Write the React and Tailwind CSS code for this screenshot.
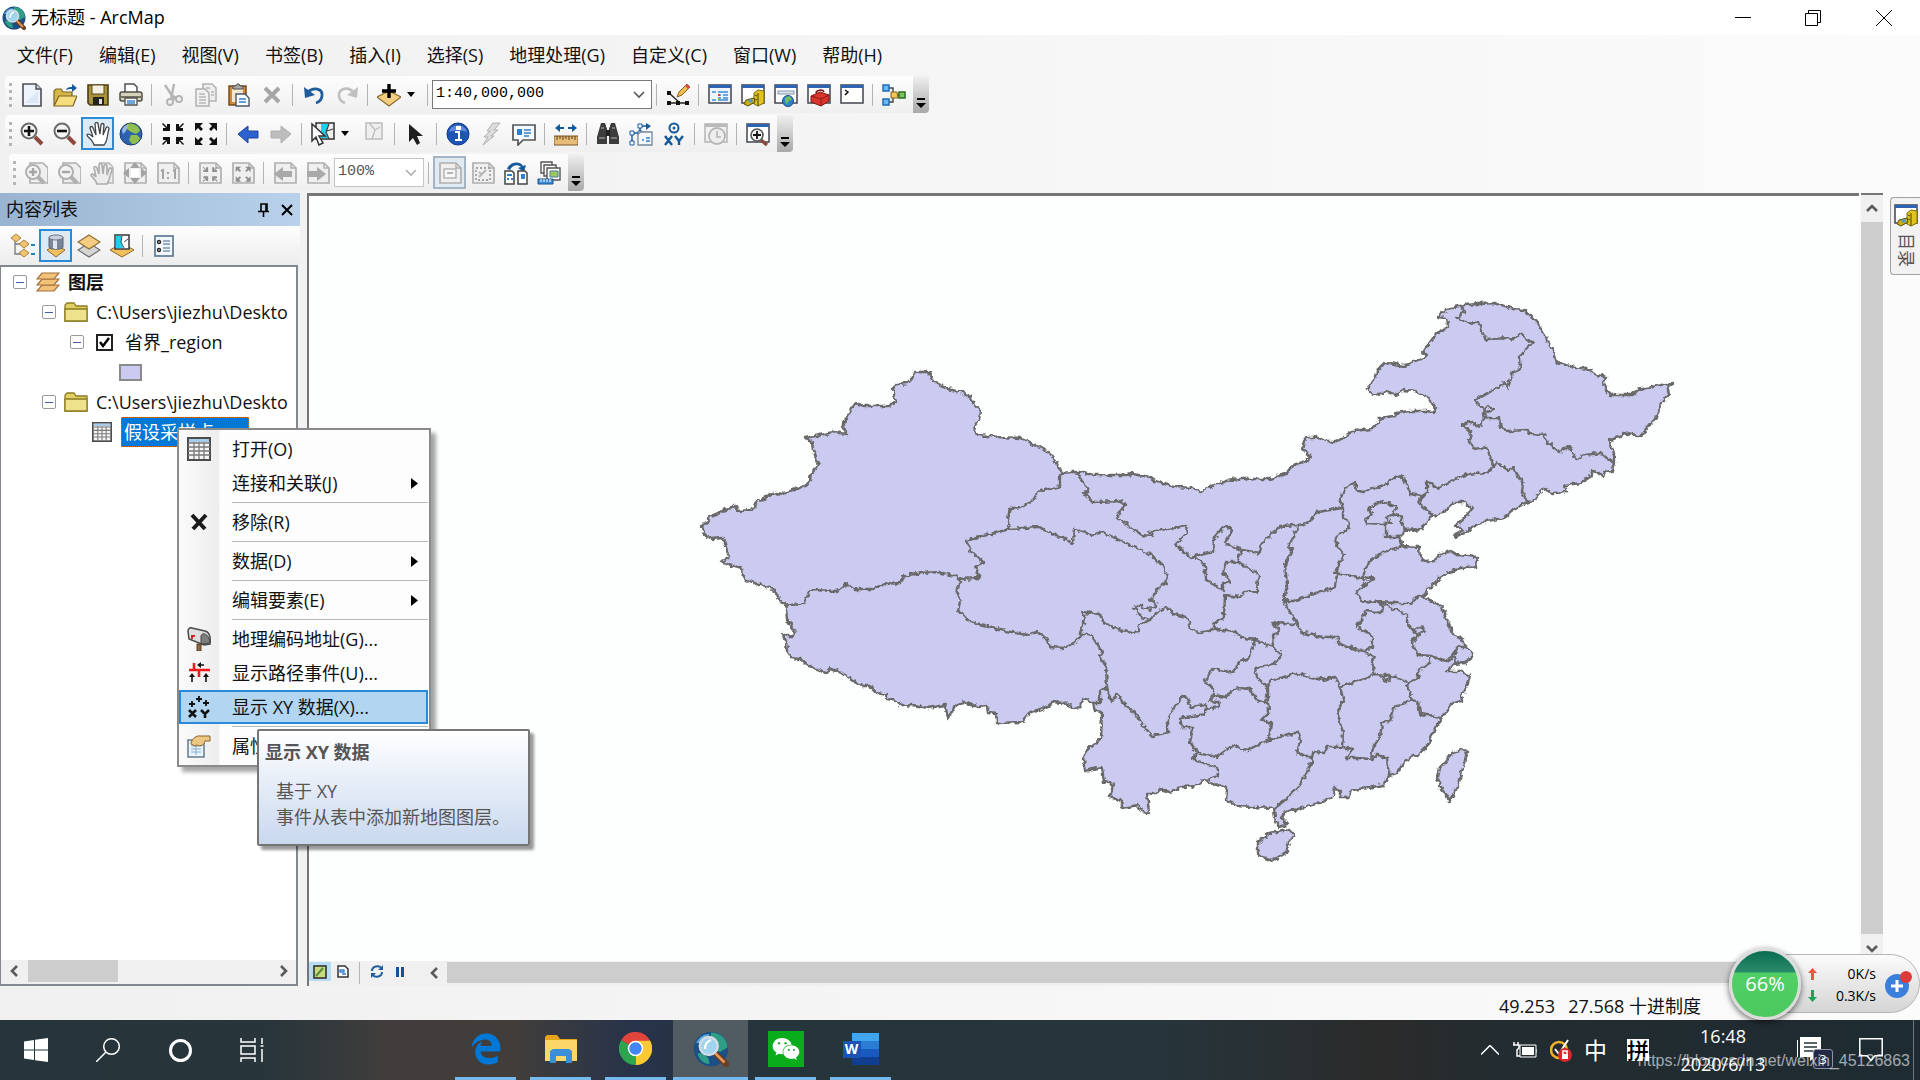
import React from "react";
import { FaEdgeLegacy, FaWeixin } from "react-icons/fa6";

const Svg = ({ children, className = "w-6 h-6" }) => (
  <svg className={className} viewBox="0 0 24 24" fill="none" aria-hidden="true">
    {children}
  </svg>
);

/* ---------- Standard toolbar icons ---------- */

const NewIcon = () => (
  <Svg>
    <path d="M3 1h13l5 5v17H3z" fill="#eef4fb" stroke="#4d4d55" strokeWidth="1.6" />
    <path d="M16 1v5h5" fill="#c9d3e0" stroke="#4d4d55" strokeWidth="1.4" />
    <path d="M6 19L18 8v12H6z" fill="#dbe8f6" />
  </Svg>
);

const OpenIcon = () => (
  <Svg>
    <path d="M1 22V8l2-2h5l2 3h9v4" fill="#d8b64a" stroke="#7a6420" strokeWidth="1.2" />
    <path d="M1 23l5-10h18l-4 10z" fill="#f6dd7d" stroke="#7a6420" strokeWidth="1.2" />
    <path d="M13 7c1-3 4-3 6-3V1l5 4-5 4V6c-3 0-4 0-6 1z" fill="#14599c" />
  </Svg>
);

const SaveIcon = () => (
  <Svg>
    <path d="M2 2h20v20H4l-2-2z" fill="#a8923c" stroke="#4a3d14" strokeWidth="1.6" />
    <rect x="6" y="2" width="12" height="9" fill="#f4f1e4" stroke="#5b4d1d" />
    <rect x="7" y="14" width="11" height="8" fill="#222" />
    <rect x="13" y="16" width="3" height="5" fill="#ddd" />
  </Svg>
);

const PrintIcon = () => (
  <Svg>
    <path d="M6 9V1h9l3 3v5" fill="#fff" stroke="#505050" strokeWidth="1.5" />
    <rect x="1" y="9" width="22" height="9" rx="2" fill="#d6d3bb" stroke="#4d4d45" strokeWidth="1.5" />
    <path d="M2 14h20" stroke="#77725c" strokeWidth="2" />
    <path d="M6 15h12v7H6z" fill="#fff" stroke="#505050" strokeWidth="1.3" />
    <path d="M8 18h8M8 20h8" stroke="#3d8bd0" strokeWidth="1.3" />
  </Svg>
);

const CutIcon = () => (
  <Svg>
    <path d="M4 2l10 15M13 1l-3 15" stroke="#b5b5b5" strokeWidth="2.4" />
    <circle cx="9" cy="19" r="3" stroke="#b5b5b5" strokeWidth="2" />
    <circle cx="18" cy="16" r="3" stroke="#b5b5b5" strokeWidth="2" />
    <path d="M10 12l6 3" stroke="#b5b5b5" strokeWidth="2" />
  </Svg>
);

const CopyIcon = () => (
  <Svg>
    <path d="M9 1h9l4 4v13H9z" fill="#eee" stroke="#b0b0b0" strokeWidth="1.5" />
    <path d="M2 6h9l4 4v13H2z" fill="#f1f1f1" stroke="#b0b0b0" strokeWidth="1.5" />
    <path d="M5 11h6M5 14h7M5 17h7M5 20h7M12 5h4M17 9h3M17 12h3" stroke="#b8b8b8" strokeWidth="1.3" />
  </Svg>
);

const PasteIcon = () => (
  <Svg>
    <rect x="2" y="3" width="17" height="19" fill="#d48a35" stroke="#6d431a" strokeWidth="1.4" />
    <rect x="5" y="6" width="11" height="13" fill="#f3e7d2" />
    <path d="M6 6V3h3l1-2h2l1 2h3v3z" fill="#aaa" stroke="#505050" />
    <path d="M9 11h9l4 4v8H9z" fill="#fff" stroke="#4b5766" strokeWidth="1.4" />
    <path d="M12 16h7M12 19h7" stroke="#2f7fd0" strokeWidth="1.6" />
  </Svg>
);

const DeleteIcon = () => (
  <Svg>
    <path d="M5 5l14 14M19 5L5 19" stroke="#a6a6a6" strokeWidth="4" />
  </Svg>
);

const UndoIcon = () => (
  <Svg>
    <path d="M6 9c5-5 15-4 14 4-.5 4-3 6-6 7" stroke="#1f5c9c" strokeWidth="2.8" />
    <path d="M2 4l1 11 10-3z" fill="#1f5c9c" />
  </Svg>
);

const RedoIcon = () => (
  <Svg>
    <path d="M19 10C14 3 3 5 4 13c.5 4 3 6 6 7" stroke="#c0c0c0" strokeWidth="2.6" />
    <path d="M23 4l-1 11-10-3z" fill="#c0c0c0" />
  </Svg>
);

const AddDataIcon = () => (
  <Svg>
    <path d="M12 8l12 6-12 9L0 14z" fill="#f5cd82" stroke="#8e6c2e" strokeWidth="1.2" />
    <path d="M12 1v14M5 8h14" stroke="#000" strokeWidth="3.4" />
  </Svg>
);

const EditorIcon = () => (
  <Svg>
    <path d="M3 10l10 9M3 20h18" stroke="#222" strokeWidth="1.3" />
    <path d="M1 8h4v4H1zM1 18h4v4H1zM10 18h4v4h-4zM19 18h4v4h-4z" fill="#111" />
    <path d="M11 14l2-5 8-8 3 3-8 8z" fill="#f1bd4c" stroke="#875e1e" />
    <path d="M19 3l2-2 3 3-2 2z" fill="#d65252" />
  </Svg>
);

const WindowFrame = ({ children, fill = "#fff", bar = "#2e62b3", edge = "#4c4f57" }) => (
  <Svg>
    <rect x="1" y="2" width="22" height="18" fill={fill} stroke={edge} strokeWidth="1.6" />
    <rect x="1" y="2" width="22" height="3" fill={bar} />
    {children}
  </Svg>
);

const TocWindowIcon = () => (
  <WindowFrame fill="#eef5fd">
    <path d="M4 9h4M10 12h3M10 15h3M4 17h4" stroke="#3b8ed8" strokeWidth="1.6" />
    <path d="M10 9h10M15 12h5M15 15h5M10 17h10" stroke="#3b8ed8" strokeWidth="1.5" />
    <path d="M10 12h2" stroke="#e33" strokeWidth="2" />
    <path d="M10 16h2" stroke="#7fc21b" strokeWidth="2" />
  </WindowFrame>
);

const CatalogIcon = () => (
  <WindowFrame>
    <path d="M13 10l4-3 6 1v12l-6 3-4-2z" fill="#e1c51e" stroke="#7d6b0a" />
    <path d="M17 10v13M14 12l2 1M14 16l2 1" stroke="#6e5e05" strokeWidth="1.3" />
    <path d="M5 17l8-2 1 4-7 4-4-2z" fill="#c9ae14" stroke="#5b4e05" />
    <path d="M7 17l4-1 1 3-3 1z" fill="#4f9bd0" />
  </WindowFrame>
);

const SearchWindowIcon = () => (
  <WindowFrame>
    <rect x="4" y="8" width="16" height="3" fill="#dbe6f2" stroke="#8595a8" />
    <circle cx="14" cy="18" r="5.5" fill="#2f7fcf" stroke="#1e4f8a" />
    <path d="M11 15l4-2 3 3-4 3-1 3-2-4z" fill="#6fc05a" />
  </WindowFrame>
);

const ToolboxIcon = () => (
  <WindowFrame>
    <path d="M4 13l9-4 9 3v6l-8 5-10-4z" fill="#d9352c" stroke="#7d1610" />
    <path d="M4 13l10 3 8-4M14 16v7" stroke="#8e1b14" />
    <path d="M9 10c0-3 7-4 8-1" stroke="#7d1610" strokeWidth="1.6" />
  </WindowFrame>
);

const PythonIcon = () => (
  <WindowFrame>
    <path d="M5 7l3 2-3 3" stroke="#111" strokeWidth="1.5" />
  </WindowFrame>
);

const ModelIcon = () => (
  <Svg>
    <path d="M7 5h4v14H7M11 12h12" stroke="#444" strokeWidth="1.4" />
    <rect x="1" y="2" width="6" height="6" fill="#6cb8f2" stroke="#1c6cb5" strokeWidth="1.5" />
    <rect x="1" y="16" width="6" height="6" fill="#6cb8f2" stroke="#1c6cb5" strokeWidth="1.5" />
    <path d="M9 9l6 0 1 6H9z" fill="#f3c557" stroke="#83601a" />
    <rect x="17" y="9" width="6" height="6" fill="#7cc463" stroke="#2c6e1d" strokeWidth="1.5" />
  </Svg>
);

/* ---------- Tools toolbar icons ---------- */

const Magnifier = ({ plus, dim }) => (
  <Svg>
    <path d="M15 15l7 7" stroke={dim ? "#b5b5b5" : "#8c4a3c"} strokeWidth="4" />
    <circle cx="9" cy="9" r="7.5" fill="#f5f5f5" stroke={dim ? "#b5b5b5" : "#6a6a6a"} strokeWidth="2" />
    <path d={plus ? "M4 9h10M9 4v10" : "M4 9h10"} stroke={dim ? "#b5b5b5" : "#111"} strokeWidth="2.6" />
  </Svg>
);

const HandIcon = ({ dim }) => (
  <Svg>
    <path
      d="M8 23C7 18 1 15 1 13c1-2 4 0 6 2L4 6c0-2 2-2 3 0l3 7L9 2c0-2 3-2 3 0l2 10 1-9c0-2 3-2 3 0l-1 10 3-7c1-2 3-1 3 1-2 5-1 12-5 16z"
      fill={dim ? "#ececec" : "#fff"}
      stroke={dim ? "#b5b5b5" : "#444"}
      strokeWidth="1.3"
    />
  </Svg>
);

const GlobeIcon = () => (
  <Svg>
    <circle cx="12" cy="12" r="11" fill="#2e62ad" stroke="#1c3c70" />
    <path d="M8 2c5-2 12 1 13 7l-4 3-5-2-4-3zM12 13l6 0 3 3c-1 4-4 6-8 6l-3-4z" fill="#8fc04e" />
    <path d="M3 8c1-3 3-5 6-5L7 9 4 12z" fill="#b5d2f2" opacity=".8" />
  </Svg>
);

const Arrows4In = ({ c = "#111" }) => (
  <path
    d="M2 1l4 4V2h3v7H2V6h3L1 2zM22 1l-4 4V2h-3v7h7V6h-3l4-4zM2 23l4-4v3h3v-7H2v3h3l-4 4zM22 23l-4-4v3h-3v-7h7v3h-3l4 4z"
    fill={c}
  />
);
const Arrows4Out = ({ c = "#111" }) => (
  <path
    d="M1 1h8L6 4l3 3-2 2-3-3-3 3zM23 1h-8l3 3-3 3 2 2 3-3 3 3zM1 23h8l-3-3 3-3-2-2-3 3-3-3zM23 23h-8l3-3-3-3 2-2 3 3 3-3z"
    fill={c}
  />
);

const FixedInIcon = () => (
  <Svg>
    <Arrows4In />
  </Svg>
);
const FixedOutIcon = () => (
  <Svg>
    <Arrows4Out />
  </Svg>
);

const BackIcon = () => (
  <Svg>
    <path d="M2 12L12 4v5h10v7H12v5z" fill="#2b62cf" stroke="#1d4699" />
  </Svg>
);
const ForwardIcon = () => (
  <Svg>
    <path d="M22 12L12 4v5H2v7h10v5z" fill="#bdbdbd" stroke="#b0b0b0" />
  </Svg>
);

const SelectFeaturesIcon = () => (
  <Svg>
    <rect x="5" y="1" width="18" height="16" fill="#eee" stroke="#3b3b3b" strokeWidth="1.6" />
    <path d="M10 2h8l-3 8 2 6h-7z" fill="#1fd0ee" />
    <path d="M18 2l-3 8 3 7M16 9l6-2" stroke="#444" strokeWidth="1.3" />
    <path d="M1 2v17l4-4 3 8 4-2-4-7h6z" fill="#fff" stroke="#333" strokeWidth="1.5" />
  </Svg>
);

const ClearSelectionIcon = () => (
  <Svg>
    <rect x="4" y="1" width="16" height="16" fill="#efefef" stroke="#bcbcbc" strokeWidth="1.5" />
    <path d="M8 2l5 6 5-3M13 8l-3 9" stroke="#bcbcbc" strokeWidth="1.3" />
  </Svg>
);

const PointerIcon = () => (
  <Svg>
    <path d="M5 2v18l4-4 4 7 3-2-3-7h6z" fill="#1e1e1e" />
  </Svg>
);

const InfoIcon = () => (
  <Svg>
    <circle cx="12" cy="12" r="11" fill="#1d55b5" stroke="#123c87" />
    <path d="M3 10C5 1 19 1 21 10c-5-2-13-2-18 0z" fill="#5c8cdb" />
    <path d="M9 10h4v8M9 18h7M11 5h3v2h-3z" stroke="#fff" strokeWidth="2" />
  </Svg>
);

const BoltIcon = () => (
  <Svg>
    <path d="M14 1h7l-6 7h4l-7 6h3L4 23l5-8H5l6-6H8z" fill="#dcdcdc" stroke="#b0b0b0" />
  </Svg>
);

const PopupIcon = () => (
  <Svg>
    <path d="M1 3h22v15H11l-5 5v-5H1z" fill="#f4f9ff" stroke="#555" strokeWidth="1.7" />
    <rect x="5" y="7" width="5" height="6" fill="#2f7fd0" />
    <path d="M12 8h7M12 11h7M12 14h5" stroke="#2f7fd0" strokeWidth="1.5" />
  </Svg>
);

const MeasureIcon = () => (
  <Svg>
    <path d="M1 6l5-4v3h4v2H6v3zM23 6l-5-4v3h-4v2h4v3z" fill="#14599c" />
    <rect x="0" y="14" width="24" height="9" fill="#e8bd7c" stroke="#7d5526" />
    <path d="M3 14v4M6 14v3M9 14v4M12 14v3M15 14v4M18 14v3M21 14v4" stroke="#5b3b15" />
  </Svg>
);

const BinocularsIcon = () => (
  <Svg>
    <path d="M5 1h4l2 6v15H1v-7z M19 1h-4l-2 6v15h10v-7z" fill="#3c3c3c" />
    <path d="M10 8h4v6h-4z" fill="#222" />
    <path d="M3 16h6M15 16h6M5 6h3M16 6h3" stroke="#8d8d8d" strokeWidth="1.6" />
  </Svg>
);

const RouteIcon = () => (
  <Svg>
    <path d="M3 21V11h8V4h6" stroke="#14599c" strokeWidth="1.4" />
    <path d="M17 1l5 3-5 4z" fill="#14599c" />
    <path d="M1 9h4v4H1zM9 9h4v4H9zM9 2h4v4H9zM1 19h4v4H1z" fill="#fff" stroke="#14599c" />
    <path d="M9 12l3-2h11v13H9z" fill="#f6faff" stroke="#75869a" strokeWidth="1.3" />
    <path d="M13 18h2M17 16h4M17 19h4" stroke="#2f7fd0" strokeWidth="1.4" />
  </Svg>
);

const GoToXYIcon = () => (
  <Svg>
    <circle cx="12" cy="6" r="4.5" stroke="#14599c" strokeWidth="2" />
    <circle cx="12" cy="6" r="1.5" fill="#14599c" />
    <path d="M3 14l7 9M10 14l-7 9M13 14l4 5 4-5M17 19v4" stroke="#14599c" strokeWidth="2.4" />
  </Svg>
);

const TimeIcon = () => (
  <WindowFrame fill="#f1f1f1" bar="#b9b9b9" edge="#b9b9b9">
    <circle cx="13" cy="14" r="8" fill="#eee" stroke="#b5b5b5" strokeWidth="1.8" />
    <path d="M13 9v6h4" stroke="#b5b5b5" strokeWidth="1.6" />
  </WindowFrame>
);

const ViewerIcon = () => (
  <WindowFrame>
    <path d="M15 18l6 5" stroke="#8c4a3c" strokeWidth="3.5" />
    <circle cx="11" cy="13" r="6" fill="#f2f2f2" stroke="#555" strokeWidth="1.6" />
    <path d="M7 13h8M11 9v8" stroke="#111" strokeWidth="1.8" />
  </WindowFrame>
);

/* ---------- Layout toolbar icons ---------- */

const GreyPage = ({ children }) => (
  <Svg>
    <path d="M2 2h16l5 5v15H2z" fill="#efefef" stroke="#b0b0b0" strokeWidth="1.7" />
    <path d="M18 2v5h5" stroke="#b0b0b0" strokeWidth="1.4" />
    {children}
  </Svg>
);

const PageZoomIcon = ({ plus }) => (
  <Svg>
    <path d="M6 2h13l5 5v15H6z" fill="#efefef" stroke="#b0b0b0" strokeWidth="1.7" />
    <path d="M14 16l6 6" stroke="#b0b0b0" strokeWidth="4" />
    <circle cx="9" cy="11" r="7" fill="#f3f3f3" stroke="#b0b0b0" strokeWidth="2" />
    <path d={plus ? "M5 11h8M9 7v8" : "M5 11h8"} stroke="#a5a5a5" strokeWidth="2.4" />
  </Svg>
);

const PageHandIcon = () => (
  <Svg>
    <path d="M9 2h10l4 4v16H12" fill="#efefef" stroke="#b8b8b8" strokeWidth="1.5" />
    <path
      d="M7 23C6 18 1 16 1 14c1-2 4 0 5 2L4 7c0-2 2-2 3 0l2 6V4c0-2 3-2 3 0l1 9 1-8c0-2 3-2 3 0v9l2-6c1-2 3-1 3 1-2 5-2 10-5 14z"
      fill="#ececec"
      stroke="#acacac"
      strokeWidth="1.6"
    />
  </Svg>
);

const WholePageIcon = () => (
  <GreyPage>
    <rect x="8" y="8" width="8" height="8" fill="#fff" />
    <path d="M12 1l5 6H7zM12 23l5-6H7zM0 12l6-5v10zM24 12l-6-5v10z" fill="#a3a3a3" />
  </GreyPage>
);

const OneToOneIcon = () => (
  <GreyPage>
    <path d="M5 10l2-1v9M17 10l2-1v9" stroke="#a3a3a3" strokeWidth="2" />
    <path d="M11 11h2v2h-2zM11 16h2v2h-2z" fill="#a3a3a3" />
  </GreyPage>
);

const PageInIcon = () => (
  <GreyPage>
    <g transform="translate(4 5) scale(.68)">
      <Arrows4In c="#8f8f8f" />
    </g>
  </GreyPage>
);
const PageOutIcon = () => (
  <GreyPage>
    <g transform="translate(4 5) scale(.68)">
      <Arrows4Out c="#8f8f8f" />
    </g>
  </GreyPage>
);
const PageBackIcon = () => (
  <GreyPage>
    <path d="M1 13l9-7v4h9v6h-9v4z" fill="#a9a9a9" />
  </GreyPage>
);
const PageForwardIcon = () => (
  <GreyPage>
    <path d="M20 13l-9-7v4H1v6h10v4z" fill="#a9a9a9" />
  </GreyPage>
);
const DraftIcon = () => (
  <GreyPage>
    <rect x="6" y="8" width="12" height="9" fill="#f8f8f8" stroke="#b0b0b0" strokeWidth="1.4" />
    <path d="M9 12h6" stroke="#a3a3a3" strokeWidth="1.6" />
  </GreyPage>
);
const FocusFrameIcon = () => (
  <GreyPage>
    <rect x="5" y="7" width="14" height="12" stroke="#a3a3a3" strokeWidth="1.8" strokeDasharray="2 2" />
    <path d="M8 16l7-7M8 11l3 3" stroke="#b5b5b5" strokeWidth="2" />
  </GreyPage>
);

const ChangeLayoutIcon = () => (
  <Svg>
    <path d="M3 8C6 0 17 0 19 5l3-1-2 7-6-4 3-1C14 3 8 4 6 9z" fill="#14599c" />
    <path d="M1 10h7l2 2v11H1zM14 10h7l2 2v11h-9z" fill="#fff" stroke="#444" strokeWidth="1.5" />
    <path d="M3 14h5M3 18h2M7 18h2" stroke="#2f7fd0" strokeWidth="2" />
    <path d="M17 13h4v5h-4z" fill="#2f7fd0" />
  </Svg>
);

const DrivenPagesIcon = () => (
  <Svg>
    <path d="M4 1h11v11H4z" fill="#fff" stroke="#555" strokeWidth="1.4" />
    <path d="M7 4h12v11H7z" fill="#fff" stroke="#555" strokeWidth="1.4" />
    <path d="M10 7h13v12H10z" fill="#fff" stroke="#555" strokeWidth="1.4" />
    <path d="M13 10h8v6h-8z" fill="#9ec95e" stroke="#4b7a9a" />
    <path d="M1 18h15v5H1z" fill="#3f8fd8" stroke="#1d4f88" />
    <path d="M4 18v3M7 18v3M10 18v3M13 18v3" stroke="#fff" />
  </Svg>
);

/* ---------- Table of contents icons ---------- */

const Diamond = ({ y, fill, stroke = "#8e6c2e" }) => (
  <path d={`M12 ${y}l11 7-11 7L1 ${y + 7}z`} fill={fill} stroke={stroke} strokeWidth="1.2" />
);

const DrawingOrderIcon = () => (
  <Svg>
    <path d="M4 6v14h6M4 10h7" stroke="#777" strokeWidth="1.3" />
    <path d="M5 0l5 4-5 4-5-4zM13 6l5 4-5 4-5-4zM13 15l5 4-5 4-5-4z" fill="#f0c272" stroke="#a8803c" />
    <path d="M20 11h4M20 20h4" stroke="#2e7fae" strokeWidth="2" />
  </Svg>
);
const SourceIcon = () => (
  <Svg>
    <path d="M12 11l9 5-9 7-9-7z" fill="#f0c05c" stroke="#8e6c2e" />
    <path d="M5 3v10c0 3 14 3 14 0V3z" fill="#78869c" stroke="#5a6474" />
    <path d="M9 5v9c1 1 3 1 4 1V5z" fill="#dfe6ef" />
    <ellipse cx="12" cy="3.500" rx="7" ry="2.500" fill="#c9d1dc" stroke="#6a7484" />
  </Svg>
);
const VisibilityIcon = () => (
  <Svg>
    <Diamond y={9} fill="#d5d5d5" stroke="#6e6e6e" />
    <Diamond y={1} fill="#f5cd82" />
  </Svg>
);
const SelectionIcon = () => (
  <Svg>
    <path d="M12 9l12 7-12 7-12-7z" fill="#f0c05c" stroke="#8e6c2e" />
    <rect x="5" y="1" width="14" height="14" fill="#fff" stroke="#444" strokeWidth="1.6" />
    <path d="M6 2h6l-1 6 2 6H6z" fill="#1fd0ee" />
    <path d="M12 2l-1 6 3 6M14 8l4-3" stroke="#444" />
  </Svg>
);
const OptionsIcon = () => (
  <Svg>
    <rect x="3" y="2" width="18" height="20" fill="#f2f7fc" stroke="#54708f" strokeWidth="1.6" />
    <circle cx="7" cy="8" r="1.500" stroke="#222" strokeWidth="1.4" />
    <circle cx="7" cy="16" r="1.500" stroke="#222" strokeWidth="1.4" />
    <path d="M11 7h7M11 10h7M11 14h7M11 17h7" stroke="#7c93ad" strokeWidth="1.5" />
  </Svg>
);
const LayersIcon = () => (
  <Svg>
    {[15, 9, 3].map((y) => (
      <path key={y} d={`M6 ${y}h17l-5 6H1z`} fill="#f3c27a" stroke="#a2713a" strokeWidth="1.2" />
    ))}
  </Svg>
);
const FolderIcon = () => (
  <Svg>
    <path d="M1 21V5l2-2h7l2 3h11v15z" fill="#e0cf62" stroke="#8c7c22" strokeWidth="1.3" />
    <path d="M1 9h22v12H1z" fill="#efe28d" stroke="#8c7c22" strokeWidth="1.3" />
  </Svg>
);
const TableIcon = ({ className }) => (
  <Svg className={className}>
    <rect x="1" y="1" width="22" height="22" fill="#f6f6f6" stroke="#4c4c4c" strokeWidth="2" />
    <rect x="2" y="2" width="20" height="3" fill="#a8cdea" />
    <path d="M1 6h22M1 10h22M1 14h22M1 18h22M7 5v17M12 5v17M17 5v17" stroke="#7a7a7a" strokeWidth="1.3" />
  </Svg>
);

/* ---------- Context menu icons ---------- */

const RemoveIcon = () => (
  <Svg>
    <path d="M5 5l13 14M19 5L6 19" stroke="#1a1a1a" strokeWidth="4" />
  </Svg>
);
const MailboxIcon = () => (
  <Svg>
    <path d="M10 17h4v7h-4z" fill="#96643a" stroke="#5d3c1f" />
    <path d="M1 4c0-2 2-4 4-3l13 3c4 1 6 5 5 13l-6 1L2 12z" fill="#dedede" stroke="#4a4a4a" strokeWidth="1.5" />
    <path d="M14 17V9c1-4 8-3 9 7z" fill="#7e7e7e" stroke="#444" />
    <path d="M5 8v4M5 9h3" stroke="#d22" strokeWidth="2" />
  </Svg>
);
const RouteEventIcon = () => (
  <Svg>
    <path d="M2 9h21M7 2v7M12 9v7" stroke="#ee1c1c" strokeWidth="2.6" />
    <path d="M12 4h5M5 14v7M19 14v7" stroke="#111" strokeWidth="1.6" />
    <path d="M10 4l4-3v6zM2 16l3-4 3 4zM16 16l3-4 3 4z" fill="#111" />
  </Svg>
);
const XYDataIcon = () => (
  <Svg>
    <path d="M12 1v6M9 4h6M5 6v6M2 9h6M19 5v6M16 8h6" stroke="#111" strokeWidth="1.8" />
    <path d="M2 15l7 7M9 15l-7 7M14 15l4 4 4-4M18 18v5" stroke="#111" strokeWidth="2.6" />
  </Svg>
);
const PropertiesIcon = () => (
  <Svg>
    <rect x="1" y="6" width="16" height="17" fill="#e9f3fc" stroke="#5d7186" strokeWidth="1.4" />
    <path d="M4 12h10M4 15h10M4 18h10M9 10v11" stroke="#86add0" />
    <path d="M4 10c0-4 5-9 9-8h10v5h-5c-1 4-4 6-8 4l-2 1z" fill="#ecc781" stroke="#8a6230" />
  </Svg>
);

const ArcMapLogo = ({ className }) => (
  <Svg className={className}>
    <circle cx="12" cy="12" r="11.500" fill="#1b4f86" />
    <path d="M12 1c7 0 11 5 11 10l-5 3-7-3zM3 15c4-1 8 2 8 7-4 0-7-3-8-7z" fill="#2f9e86" />
    <path d="M2 8c2-4 5-6 9-6L8 8z" fill="#55a6dc" />
    <path d="M14 14l8 8" stroke="#6b3d20" strokeWidth="4" strokeLinecap="round" />
    <path d="M15 15l6 6" stroke="#e8955a" strokeWidth="1.8" />
    <circle cx="10.500" cy="10" r="6" fill="#9fd3ee" stroke="#d5dde4" strokeWidth="1.6" />
    <path d="M8 12c0-3 1-5 4-6" stroke="#fff" strokeWidth="1.5" />
  </Svg>
);

/* ---------- Toolbar parts ---------- */

const Grip = () => (
  <span className="flex w-[10px] shrink-0 flex-col items-center gap-1">
    <i className="h-[3px] w-[3px] bg-[#b5b5b5]" />
    <i className="h-[3px] w-[3px] bg-[#b5b5b5]" />
    <i className="h-[3px] w-[3px] bg-[#b5b5b5]" />
    <i className="h-[3px] w-[3px] bg-[#b5b5b5]" />
  </span>
);

const Sep = () => (
  <span className="flex w-[9px] shrink-0 justify-center">
    <i className="h-[22px] w-px bg-[#b4b4b4]" />
  </span>
);

const ToolButton = ({ icon: Icon, label, active, dim, ...iconProps }) => (
  <button
    type="button"
    aria-label={label}
    className={`flex h-[33px] w-[33px] shrink-0 items-center justify-center ${
      active
        ? dim
          ? "border-2 border-[#a5b4c2] bg-[#dfeaf3]"
          : "border-2 border-[#2a8ad8] bg-[#dceaf6]"
        : ""
    }`}
  >
    <Icon dim={dim} {...iconProps} />
  </button>
);

const DropArrow = ({ label }) => (
  <button type="button" aria-label={label} className="flex h-[33px] w-[18px] shrink-0 items-center pl-[2px]">
    <svg className="h-[5px] w-2" viewBox="0 0 8 5">
      <path d="M0 0h8L4 5z" />
    </svg>
  </button>
);

const Overflow = () => (
  <button
    type="button"
    aria-label="工具栏选项"
    className="ml-[3px] flex h-[37px] w-4 shrink-0 items-end justify-center rounded-r bg-gradient-to-b from-[#f0f0f0] to-[#a9a9a9] pb-1"
  >
    <svg className="h-[11px] w-[10px]" viewBox="0 0 10 11">
      <path d="M1 0h8v2H1zM0 5h10l-5 5z" />
    </svg>
  </button>
);

const ComboBox = ({ label, value, className, disabled }) => (
  <label className={`grid shrink-0 items-center border bg-white ${className}`}>
    <select
      aria-label={label}
      defaultValue={value}
      className={`col-start-1 row-start-1 h-full w-full appearance-none px-[3px] font-['Liberation_Mono',monospace] text-[15px] ${
        disabled ? "text-[#555]" : "text-black"
      }`}
    >
      <option>{value}</option>
    </select>
    <svg
      className="pointer-events-none col-start-1 row-start-1 mr-[6px] h-2 w-3 justify-self-end"
      viewBox="0 0 12 8"
      fill="none"
    >
      <path d="M1 1l5 5 5-5" stroke={disabled ? "#b0b0b0" : "#555"} strokeWidth="1.6" />
    </svg>
  </label>
);

const Bar = ({ children, className = "" }) => (
  <div className="flex">
    <div
      className={`flex h-[37px] items-center rounded bg-gradient-to-b from-[#fdfdfd] to-[#efefef] ${className}`}
    >
      {children}
    </div>
  </div>
);

const Chevron = ({ dir }) => {
  const paths = {
    left: "M8 1L3 6l5 5",
    right: "M4 1l5 5-5 5",
    up: "M1 8l5-5 5 5",
    down: "M1 4l5 5 5-5",
  };
  return (
    <svg className="h-3 w-3" viewBox="0 0 12 12" fill="none">
      <path d={paths[dir]} stroke="#5a5a5a" strokeWidth="2.600" />
    </svg>
  );
};

/* ---------- Title bar, menus and toolbars ---------- */

const menus = [
  "文件(F)",
  "编辑(E)",
  "视图(V)",
  "书签(B)",
  "插入(I)",
  "选择(S)",
  "地理处理(G)",
  "自定义(C)",
  "窗口(W)",
  "帮助(H)",
];

const TitleBar = () => (
  <header className="flex h-[35px] shrink-0 items-center bg-white text-black">
    <ArcMapLogo className="ml-[2px] h-6 w-6" />
    <h1 className="ml-[5px] flex-1 text-[18px]">无标题 - ArcMap</h1>
    <button type="button" aria-label="最小化" className="flex h-full w-[70px] items-center justify-center">
      <svg className="h-4 w-4" viewBox="0 0 16 16">
        <path d="M0 7.500h16" stroke="#000" />
      </svg>
    </button>
    <button type="button" aria-label="还原" className="flex h-full w-[70px] items-center justify-center">
      <svg className="h-4 w-4" viewBox="0 0 16 16" fill="none">
        <path d="M.5 3.500h12v12H.5zM3.500 3V.5h12v12H13" stroke="#000" />
      </svg>
    </button>
    <button type="button" aria-label="关闭" className="flex h-full w-[72px] items-center justify-center">
      <svg className="h-4 w-4" viewBox="0 0 16 16">
        <path d="M0 0l16 16M16 0L0 16" stroke="#000" />
      </svg>
    </button>
  </header>
);

const MenuBar = () => (
  <nav className="flex h-[41px] items-center pl-1 text-[18px]">
    {menus.map((menu) => (
      <button key={menu} type="button" className="px-[13px] whitespace-nowrap">
        {menu}
      </button>
    ))}
  </nav>
);

const Toolbars = () => (
  <div className="flex flex-col gap-[2px] pb-[2px] pl-[5px]">
    <Bar>
      <Grip />
      <ToolButton icon={NewIcon} label="新建" />
      <ToolButton icon={OpenIcon} label="打开" />
      <ToolButton icon={SaveIcon} label="保存" />
      <ToolButton icon={PrintIcon} label="打印" />
      <Sep />
      <ToolButton icon={CutIcon} label="剪切" />
      <ToolButton icon={CopyIcon} label="复制" />
      <ToolButton icon={PasteIcon} label="粘贴" />
      <ToolButton icon={DeleteIcon} label="删除" />
      <Sep />
      <ToolButton icon={UndoIcon} label="撤消" />
      <ToolButton icon={RedoIcon} label="恢复" />
      <Sep />
      <ToolButton icon={AddDataIcon} label="添加数据" />
      <DropArrow label="添加数据选项" />
      <Sep />
      <ComboBox label="比例尺" value="1:40,000,000" className="h-[29px] w-[220px] border-[#7a7a7a]" />
      <Sep />
      <ToolButton icon={EditorIcon} label="编辑器工具条" />
      <Sep />
      <ToolButton icon={TocWindowIcon} label="内容列表" />
      <ToolButton icon={CatalogIcon} label="目录" />
      <ToolButton icon={SearchWindowIcon} label="搜索" />
      <ToolButton icon={ToolboxIcon} label="工具箱" />
      <ToolButton icon={PythonIcon} label="Python" />
      <Sep />
      <ToolButton icon={ModelIcon} label="模型构建器" />
      <Overflow />
    </Bar>
    <Bar>
      <Grip />
      <ToolButton icon={Magnifier} plus label="放大" />
      <ToolButton icon={Magnifier} label="缩小" />
      <ToolButton icon={HandIcon} label="平移" active />
      <ToolButton icon={GlobeIcon} label="全图" />
      <Sep />
      <ToolButton icon={FixedInIcon} label="固定比例放大" />
      <ToolButton icon={FixedOutIcon} label="固定比例缩小" />
      <Sep />
      <ToolButton icon={BackIcon} label="返回上一视图" />
      <ToolButton icon={ForwardIcon} label="转到下一视图" />
      <Sep />
      <ToolButton icon={SelectFeaturesIcon} label="选择要素" />
      <DropArrow label="选择要素选项" />
      <ToolButton icon={ClearSelectionIcon} label="清除所选要素" />
      <Sep />
      <ToolButton icon={PointerIcon} label="选择元素" />
      <Sep />
      <ToolButton icon={InfoIcon} label="识别" />
      <ToolButton icon={BoltIcon} label="超链接" />
      <ToolButton icon={PopupIcon} label="HTML 弹出窗口" />
      <Sep />
      <ToolButton icon={MeasureIcon} label="测量" />
      <Sep />
      <ToolButton icon={BinocularsIcon} label="查找" />
      <ToolButton icon={RouteIcon} label="查找路径" />
      <ToolButton icon={GoToXYIcon} label="转到 XY" />
      <Sep />
      <ToolButton icon={TimeIcon} label="时间滑块" />
      <Sep />
      <ToolButton icon={ViewerIcon} label="创建查看器窗口" />
      <Overflow />
    </Bar>
    <Bar className="ml-1">
      <Grip />
      <ToolButton icon={PageZoomIcon} plus label="页面放大" />
      <ToolButton icon={PageZoomIcon} label="页面缩小" />
      <ToolButton icon={PageHandIcon} label="页面平移" />
      <ToolButton icon={WholePageIcon} label="缩放整个页面" />
      <ToolButton icon={OneToOneIcon} label="缩放至 100%" />
      <Sep />
      <ToolButton icon={PageInIcon} label="页面固定放大" />
      <ToolButton icon={PageOutIcon} label="页面固定缩小" />
      <Sep />
      <ToolButton icon={PageBackIcon} label="返回到范围" />
      <ToolButton icon={PageForwardIcon} label="前进至范围" />
      <ComboBox label="页面缩放" value="100%" disabled className="h-[29px] w-[90px] border-[#c4c4c4]" />
      <Sep />
      <ToolButton icon={DraftIcon} label="切换描绘模式" active dim />
      <ToolButton icon={FocusFrameIcon} label="焦点数据框" />
      <ToolButton icon={ChangeLayoutIcon} label="更改布局" />
      <ToolButton icon={DrivenPagesIcon} label="数据驱动页面" />
      <Overflow />
    </Bar>
  </div>
);

/* ---------- Table of contents ---------- */

const Expander = () => (
  <button
    type="button"
    aria-label="折叠"
    className="flex h-[14px] w-[14px] shrink-0 items-center justify-center rounded-[2px] border border-[#9a9a9a] bg-white"
  >
    <i className="h-px w-2 bg-[#4a5d9c]" />
  </button>
);

const TocRow = ({ children, className }) => (
  <li className={`flex h-[30px] items-center whitespace-nowrap ${className}`}>{children}</li>
);

const TableOfContents = () => (
  <aside className="flex w-[300px] shrink-0 flex-col">
    <div className="flex h-[33px] shrink-0 items-center bg-gradient-to-r from-[#99b4d1] to-[#b9d1ea] pr-[2px] pl-[6px]">
      <h2 className="flex-1 text-[18px]">内容列表</h2>
      <button type="button" aria-label="自动隐藏" className="flex w-[23px] justify-center">
        <svg className="h-[14px] w-[11px]" viewBox="0 0 11 14" fill="none">
          <path d="M3 8V1h6v7M0 8.500h11M5.500 9v5M8 1v7" stroke="#000" strokeWidth="1.6" />
        </svg>
      </button>
      <button type="button" aria-label="关闭" className="flex w-[23px] justify-center">
        <svg className="h-3 w-3" viewBox="0 0 12 12">
          <path d="M1 1l10 10M11 1L1 11" stroke="#000" strokeWidth="2" />
        </svg>
      </button>
    </div>
    <div className="flex h-[39px] shrink-0 items-center bg-gradient-to-b from-[#fdfdfd] to-[#ededed] pl-[6px]">
      <ToolButton icon={DrawingOrderIcon} label="按绘制顺序列出" />
      <ToolButton icon={SourceIcon} label="按源列出" active />
      <ToolButton icon={VisibilityIcon} label="按可见性列出" />
      <ToolButton icon={SelectionIcon} label="按选择列出" />
      <Sep />
      <ToolButton icon={OptionsIcon} label="选项" />
    </div>
    <div className="mr-[2px] flex min-h-0 flex-1 flex-col border-2 border-l border-[#828790] bg-white">
      <ul className="flex-1 overflow-hidden text-[18px]">
        <TocRow className="gap-[9px] pl-3">
          <Expander />
          <LayersIcon />
          <b className="-ml-px">图层</b>
        </TocRow>
        <TocRow className="gap-2 pl-[41px]">
          <Expander />
          <FolderIcon />
          <span>C:\Users\jiezhu\Deskto</span>
        </TocRow>
        <TocRow className="gap-3 pl-[69px]">
          <Expander />
          <label className="flex items-center gap-3">
            <span className="grid">
              <input
                type="checkbox"
                defaultChecked
                className="col-start-1 row-start-1 h-[17px] w-[17px] appearance-none border-2 border-[#222] bg-white"
              />
              <svg
                className="pointer-events-none col-start-1 row-start-1 h-[17px] w-[17px]"
                viewBox="0 0 17 17"
                fill="none"
              >
                <path d="M4 8l3 4 6-8" stroke="#000" strokeWidth="2.500" />
              </svg>
            </span>
            <span>省界_region</span>
          </label>
        </TocRow>
        <TocRow className="pl-[118px]">
          <i className="h-[17px] w-[23px] border-2 border-[#8a8a8a] bg-[#cbcbf2]" />
        </TocRow>
        <TocRow className="gap-2 pl-[41px]">
          <Expander />
          <FolderIcon />
          <span>C:\Users\jiezhu\Deskto</span>
        </TocRow>
        <TocRow className="gap-[9px] pl-[91px]">
          <TableIcon className="h-5 w-5" />
          <span className="h-[30px] w-[128px] border border-dotted border-[#e07000] bg-[#0078d7] px-[2px] leading-7 text-white">
            假设采样点
          </span>
        </TocRow>
      </ul>
      <div className="flex h-[24px] shrink-0 items-start bg-[#f0f0f0]">
        <button type="button" aria-label="向左滚动" className="flex h-[22px] w-[27px] items-center justify-center">
          <Chevron dir="left" />
        </button>
        <span className="h-[22px] w-[90px] bg-[#cdcdcd]" />
        <span className="flex-1" />
        <button type="button" aria-label="向右滚动" className="flex h-[22px] w-[27px] items-center justify-center">
          <Chevron dir="right" />
        </button>
      </div>
    </div>
  </aside>
);

/* ---------- Map ---------- */

const mainland =
  "M702 527L708 520 712 515 720 513 725 509 733 508 736 505 738 511 752 510 757 501 764 500 766 496 777 493 782 494 805 486 810 481 811 473 815 468 819 465 813 450 812 442 805 438 820 435 833 432 847 434 843 427 845 421 850 411 855 403 865 406 888 406 896 403 893 389 897 384 908 383 913 378 914 372 929 372 931 377 933 382 940 385 947 389 957 391 968 395 973 403 980 409 979 421 974 428 978 435 998 437 1020 438 1038 447 1048 451 1053 457 1057 466 1063 473 1070 472 1082 472 1093 475 1125 475 1133 474 1150 477 1155 481 1175 487 1193 488 1200 492 1212 485 1227 481 1238 479 1270 479 1287 473 1295 464 1307 461 1310 457 1302 448 1306 437 1317 437 1325 441 1338 441 1353 431 1372 429 1378 423 1380 418 1395 416 1397 413 1410 411 1425 411 1434 412 1436 408 1430 400 1422 395 1415 391 1403 390 1395 395 1387 392 1373 395 1367 389 1372 382 1378 370 1386 362 1403 366 1423 358 1426 355 1423 352 1428 345 1437 333 1448 327 1447 318 1438 317 1447 309 1464 305 1495 303 1513 309 1525 310 1537 322 1547 340 1553 350 1557 363 1570 366 1587 369 1597 375 1606 377 1604 383 1606 390 1611 395 1633 395 1638 390 1657 386 1673 383 1668 389 1669 395 1661 403 1656 418 1645 430 1642 437 1623 433 1621 437 1609 440 1614 453 1614 463 1612 471 1605 472 1603 477 1598 472 1592 471 1590 477 1581 483 1565 485 1567 492 1553 493 1545 489 1540 492 1533 501 1525 503 1513 510 1503 518 1487 521 1473 527 1465 533 1455 536 1456 533 1463 530 1456 525 1465 517 1472 509 1465 502 1455 502 1445 511 1430 518 1426 523 1422 529 1405 530 1399 537 1402 546 1419 547 1420 557 1426 562 1434 561 1440 554 1450 551 1457 555 1478 557 1476 566 1455 569 1440 578 1427 590 1424 597 1442 607 1450 627 1453 635 1463 640 1466 647 1472 652 1472 658 1465 663 1453 664 1447 671 1460 671 1470 676 1467 687 1461 695 1462 701 1452 703 1442 718 1433 732 1429 744 1420 753 1405 761 1397 773 1389 776 1383 785 1368 788 1352 790 1350 797 1340 797 1340 792 1335 786 1334 796 1322 802 1302 808 1285 812 1282 818 1287 825 1278 827 1275 818 1274 808 1253 807 1237 806 1226 800 1227 788 1210 783 1205 779 1197 786 1182 787 1170 792 1160 789 1155 793 1147 793 1149 813 1142 812 1138 805 1123 808 1120 800 1109 797 1114 784 1104 782 1102 767 1085 771 1083 760 1087 750 1101 738 1102 713 1095 712 1093 703 1083 698 1080 707 1075 708 1063 703 1053 702 1047 707 1030 713 1022 722 997 723 996 714 988 713 987 706 978 707 963 702 955 706 948 718 945 705 928 708 913 705 903 706 896 701 887 699 887 695 877 693 870 686 862 686 842 673 830 668 825 673 807 665 800 659 791 658 787 652 786 642 782 633 787 636 793 636 795 632 787 619 786 610 789 605 780 602 775 589 765 587 752 582 743 578 742 568 735 566 720 562 729 558 726 547 723 538 712 539 705 535z";

const hainan =
  "M1258 842L1258 855 1272 861 1286 853 1289 842 1295 835 1290 830 1270 833z";

const taiwan =
  "M1452 753L1462 749 1467 752 1460 778 1455 792 1449 802 1447 795 1440 788 1438 777 1440 768z";

const borders = [
  "M789 605L803 604 811 590 837 591 845 584 855 589 873 589 885 584 900 583 905 576 922 573 938 572 955 576 958 579 980 578 976 567 984 563 972 552 966 541 980 537 1010 529 1008 518 1010 508 1023 507 1035 498 1038 492 1060 486 1060 475 1063 473",
  "M1010 529L1038 527 1052 533 1073 543 1074 529 1092 535 1103 532 1123 542 1150 554 1162 565 1168 576 1166 583 1158 589 1150 600 1157 605 1150 610 1137 605 1134 608 1142 617 1150 620 1138 625 1139 632 1132 633 1118 629 1103 623 1100 614 1082 612 1085 620 1080 633",
  "M1080 633L1092 636 1102 652 1100 656 1106 667 1107 687 1100 692 1100 703 1093 703",
  "M958 579L960 582 956 592 961 600 958 610 970 622 988 626 1000 630 1027 635 1037 632 1048 640 1050 647 1062 648 1072 645 1080 637 1080 633",
  "M1107 687L1111 702 1117 694 1122 700 1127 708 1133 710 1143 725 1152 736 1168 732 1168 718 1177 703 1183 696 1188 697 1190 707 1205 705 1205 714 1180 718 1182 728 1193 728 1190 742 1197 752 1193 759 1217 768 1218 775 1208 780",
  "M1205 709L1220 707 1219 703 1210 700 1213 695 1227 697 1230 692 1238 688 1250 689 1257 700 1265 703 1268 685",
  "M1268 685L1268 703 1269 712 1261 720 1271 722 1269 740 1247 750 1233 745 1217 757 1197 753",
  "M1269 740L1293 733 1299 733 1300 742 1296 752 1307 757 1312 757 1310 767 1300 785 1285 800 1275 808",
  "M1312 757L1313 752 1325 753 1327 747 1342 747 1352 749 1346 758 1357 758 1371 759 1377 755 1387 758 1389 775",
  "M1342 747L1343 732 1337 713 1344 698 1340 688",
  "M1268 685L1270 681 1287 676 1293 673 1323 680 1335 677 1340 687 1358 681 1375 675 1397 677 1408 683 1407 687 1413 700",
  "M1383 680L1385 675 1391 675 1388 681z",
  "M1413 700L1393 708 1390 722 1382 723 1380 737 1373 748 1371 759",
  "M1413 700L1418 702 1420 714 1442 717",
  "M1408 683L1418 678 1418 670 1428 665 1431 656 1447 661 1453 657 1457 647 1466 647",
  "M1453 657L1458 663",
  "M1431 656L1418 655 1412 643 1417 635 1407 623 1407 615 1392 608 1378 602",
  "M1414 630L1418 627 1423 628 1424 632 1420 635 1416 634",
  "M1375 675L1371 662 1374 657 1363 652 1372 647 1372 635 1357 627 1367 611 1382 613 1383 608 1378 602 1395 603 1412 603 1418 596 1424 597",
  "M1378 602L1363 601 1356 593 1367 582 1375 579 1365 577 1363 580 1365 568 1373 558 1387 551 1402 546",
  "M1363 578L1340 574 1337 574 1335 587 1317 593 1293 601 1284 601",
  "M1284 601L1287 585 1285 565 1292 550 1288 547 1293 538 1299 525",
  "M1299 525L1310 522 1317 512 1343 508 1343 517 1349 522 1348 530 1339 533 1335 542 1344 554 1335 572 1337 574",
  "M1343 508L1340 498 1346 487 1355 483 1357 491 1363 492 1387 484 1390 479 1403 476 1410 494 1422 496 1419 503 1433 516",
  "M1422 496L1427 493 1427 481 1438 489 1447 483 1467 474 1487 472 1494 467 1497 463 1508 470 1513 468 1523 483 1522 492 1528 502",
  "M1494 467L1491 460 1487 447 1473 449 1469 440 1471 432 1463 425 1467 422 1480 426 1485 418",
  "M1485 418L1499 418 1501 427 1507 431 1527 430 1530 434 1545 435 1548 443 1560 452 1568 446 1577 459 1585 455 1600 453 1614 463",
  "M1485 418L1483 409 1475 400 1505 383 1508 388 1513 372 1520 370 1519 358 1532 343 1520 333 1515 338 1485 339 1479 323 1465 322 1457 318 1464 312 1462 306",
  "M1484 411L1487 407 1494 409 1489 412z",
  "M1365 518L1366 523 1386 524 1386 537 1399 537M1365 518L1372 516 1369 508 1383 501 1396 507 1393 514 1402 517 1402 525 1405 530M1393 514L1386 518 1390 522 1386 524",
  "M1077 473L1088 490 1084 493 1093 502 1122 501 1125 505 1117 518 1142 535 1152 536 1150 532 1168 529 1186 526 1187 533 1175 545 1190 557 1213 552 1214 538 1222 528 1230 527 1232 532 1225 543 1242 550 1260 553 1262 543 1280 526 1299 525",
  "M1195 557L1205 565 1206 580 1223 590 1223 583 1230 582 1223 572 1226 562 1237 562 1242 550",
  "M1237 562L1258 573 1257 591 1245 592 1240 597 1225 595 1224 617 1213 623 1217 629",
  "M1150 620L1157 612 1167 607 1173 614 1187 617 1190 628 1200 633 1217 629 1233 632 1245 638 1255 640 1273 647",
  "M1255 640L1250 657 1240 662 1232 673 1213 668 1205 680 1215 693",
  "M1273 647L1272 635 1280 632 1278 628 1272 623 1295 624 1296 622 1290 612 1284 601",
  "M1296 622L1303 633 1323 637 1338 637 1340 644 1363 652",
  "M1273 647L1282 655 1273 665 1255 667 1257 677 1267 687",
];

const ChinaMap = () => (
  <svg
    className="h-full w-full"
    viewBox="309 196 1550 765"
    role="img"
    aria-label="省界_region"
    fill="none"
    stroke="#696969"
    strokeWidth="2.400"
    strokeLinejoin="round"
  >
    <filter id="rough" x="0" y="0" width="1" height="1" colorInterpolationFilters="sRGB">
      <feTurbulence type="fractalNoise" baseFrequency="0.2" numOctaves="2" seed="4" />
      <feDisplacementMap in="SourceGraphic" scale="6" xChannelSelector="R" yChannelSelector="G" />
    </filter>
    <g filter="url(#rough)">
      {/* keeps the filter region clear of the outermost coastline */}
      <path d="M680 290h1010v590H680z" stroke="none" />
      <path d={mainland} fill="#cbcbf2" />
      <path d={hainan} fill="#cbcbf2" />
      <path d={taiwan} fill="#cbcbf2" />
      {borders.map((d, index) => (
        <path key={index} d={d} />
      ))}
    </g>
  </svg>
);

const MapView = () => (
  <main className="ml-[7px] flex min-w-0 flex-1 flex-col">
    <div className="flex min-h-0 flex-1">
      <div className="min-w-0 flex-1 border-t-[3px] border-l-2 border-[#767676] bg-[#fdfefe]">
        <ChinaMap />
      </div>
      <div className="ml-[2px] flex w-[22px] shrink-0 flex-col items-center border-t-2 border-[#767676] bg-[#f0f0f0]">
        <button type="button" aria-label="向上滚动" className="flex h-[27px] items-center">
          <Chevron dir="up" />
        </button>
        <span className="w-full flex-1 bg-[#cdcdcd]" />
        <button type="button" aria-label="向下滚动" className="flex h-[27px] items-center">
          <Chevron dir="down" />
        </button>
      </div>
    </div>
    <div className="flex h-[25px] shrink-0 items-start border-l-2 border-[#767676] bg-[#f0f0f0] pt-px">
      <button
        type="button"
        aria-label="数据视图"
        className="flex h-[19px] w-[22px] items-center justify-center bg-[#b9dcf5]"
      >
        <svg className="h-[14px] w-[14px]" viewBox="0 0 14 14">
          <rect x="1" y="1" width="12" height="12" fill="#c9dc7c" stroke="#333" strokeWidth="1.600" />
          <path d="M3 11L10 3" stroke="#5a8c3a" strokeWidth="2" />
        </svg>
      </button>
      <button type="button" aria-label="布局视图" className="flex h-[19px] w-[24px] items-center justify-center">
        <svg className="h-[13px] w-3" viewBox="0 0 12 13" fill="none">
          <path d="M1 1h7l3 3v8H1z" fill="#fff" stroke="#333" strokeWidth="1.500" />
          <path d="M3 5h4v2H3zM5 9h4" stroke="#2f7fd0" strokeWidth="1.300" />
        </svg>
      </button>
      <Sep />
      <button type="button" aria-label="刷新" className="flex h-[19px] w-[26px] items-center justify-center">
        <svg className="h-[13px] w-[14px]" viewBox="0 0 14 13" fill="none">
          <path d="M2 6c0-5 7-6 9-3M12 7c0 5-7 6-9 3" stroke="#1f5c9c" strokeWidth="2" />
          <path d="M13 0v5H8zM1 13V8h5z" fill="#1f5c9c" />
        </svg>
      </button>
      <button type="button" aria-label="暂停" className="flex h-[19px] w-[20px] items-center justify-center">
        <svg className="h-[10px] w-[10px]" viewBox="0 0 10 10">
          <path d="M1 0h3v10H1zM6 0h3v10H6z" fill="#1b4f9c" />
        </svg>
      </button>
      <button
        type="button"
        aria-label="向左滚动"
        className="ml-[13px] flex h-[21px] w-[24px] items-center justify-center"
      >
        <Chevron dir="left" />
      </button>
      <span className="h-[21px] flex-1 bg-[#cdcdcd]" />
    </div>
  </main>
);

const CatalogTab = () => (
  <div className="w-[37px] shrink-0 pt-1 pl-[7px]">
    <button
      type="button"
      className="flex h-[78px] w-[30px] flex-col items-center gap-[6px] rounded-l border border-r-0 border-[#a0a0a0] bg-[#f2f2f2] pt-[5px]"
    >
      <CatalogIcon />
      <span className="text-[17px] leading-4 text-[#555] [text-orientation:sideways] [writing-mode:vertical-rl]">
        目录
      </span>
    </button>
  </div>
);

const StatusBar = () => (
  <footer className="flex h-[34px] shrink-0 items-center justify-end pt-[6px] pr-[219px] text-[18px]">
    <span>49.253</span>
    <span className="ml-[13px]">27.568 十进制度</span>
  </footer>
);

/* ---------- Context menu and tooltip ---------- */

const contextItems = [
  { label: "打开(O)", icon: TableIcon },
  { label: "连接和关联(J)", submenu: true, divider: true },
  { label: "移除(R)", icon: RemoveIcon, divider: true },
  { label: "数据(D)", submenu: true, divider: true },
  { label: "编辑要素(E)", submenu: true, divider: true },
  { label: "地理编码地址(G)...", icon: MailboxIcon },
  { label: "显示路径事件(U)...", icon: RouteEventIcon },
  { label: "显示 XY 数据(X)...", icon: XYDataIcon, selected: true, divider: true },
  { label: "属性(I)...", icon: PropertiesIcon },
];

const ContextMenu = () => (
  <div
    role="menu"
    className="absolute top-[428px] left-[177px] w-[254px] border-2 border-[#8a8a8a] bg-[linear-gradient(90deg,#fbfbfb_0,#ededed_40px,#fdfdfd_41px)] py-[2px] pr-px text-[18px] shadow-[5px_5px_4px_rgba(0,0,0,0.35)]"
  >
    {contextItems.map(({ label, icon: Icon, submenu, divider, selected }) => (
      <React.Fragment key={label}>
        <button
          type="button"
          role="menuitem"
          className={`flex h-[34px] w-full items-center border-2 pr-2 pl-[6px] ${
            selected ? "border-[#2a8ad8] bg-[#b2d6f2]" : "border-transparent"
          }`}
        >
          <span className="flex w-6 shrink-0">{Icon && <Icon />}</span>
          <span className="ml-[21px] flex-1 text-left whitespace-nowrap">{label}</span>
          {submenu && (
            <svg className="h-[11px] w-[7px]" viewBox="0 0 7 11">
              <path d="M0 0l7 5.500L0 11z" />
            </svg>
          )}
        </button>
        {divider && <hr className="my-[2px] ml-[53px] border-[#b8b8b8]" />}
      </React.Fragment>
    ))}
  </div>
);

const Tooltip = () => (
  <div
    role="tooltip"
    className="absolute top-[729px] left-[257px] h-[117px] w-[273px] rounded-[2px] border-2 border-[#767676] bg-gradient-to-b from-white to-[#c9d8ee] px-[6px] pt-[7px] text-[18px] text-[#555] shadow-[4px_4px_3px_rgba(0,0,0,0.4)]"
  >
    <p className="leading-7 font-bold">显示 XY 数据</p>
    <p className="mt-3 ml-[11px] leading-[26px] whitespace-nowrap">
      基于 XY
      <br />
      事件从表中添加新地图图层。
    </p>
  </div>
);

/* ---------- Network speed widget ---------- */

const SpeedWidget = () => (
  <div className="absolute right-0 bottom-[60px] flex h-[73px] w-[191px] items-center">
    <div className="z-10 flex h-[72px] w-[72px] shrink-0 items-center justify-center rounded-full border-[3px] border-[#dcdcdc] bg-[linear-gradient(180deg,#0b6d50_0,#2a8a6c_32%,#4fd066_33%,#4cc95e_100%)] text-[20px] text-white shadow-[0_2px_6px_rgba(0,0,0,0.6)]">
      66%
    </div>
    <div className="-ml-8 flex h-[59px] flex-1 items-center rounded-r-full border border-[#b5b5b5] bg-gradient-to-b from-[#fbfbfb] to-[#d5d5d5] pl-[38px]">
      <div className="grid w-[68px] grid-cols-[12px_1fr] items-center gap-y-[2px] pt-[2px] text-right text-[14px] leading-5 whitespace-nowrap text-black">
        <svg className="h-3 w-[9px]" viewBox="0 0 9 12">
          <path d="M0 5l4.500-5L9 5H6v7H3V5z" fill="#e8573f" />
        </svg>
        <span>0K/s</span>
        <svg className="h-3 w-[9px]" viewBox="0 0 9 12">
          <path d="M0 7l4.500 5L9 7H6V0H3v7z" fill="#1fa35a" />
        </svg>
        <span>0.3K/s</span>
      </div>
      <button type="button" aria-label="加速" className="ml-2">
        <svg className="h-[30px] w-[30px]" viewBox="0 0 30 30">
          <circle cx="13" cy="17" r="12" fill="#3b7fdd" />
          <path d="M13 11v12M7 17h12" stroke="#fff" strokeWidth="3" />
          <circle cx="22" cy="8" r="6" fill="#dd3b3b" />
        </svg>
      </button>
    </div>
  </div>
);

/* ---------- Taskbar ---------- */

const ExplorerIcon = () => (
  <svg className="h-[30px] w-8" viewBox="0 0 32 28">
    <path d="M0 2l2-2h10l3 4h17v22H0z" fill="#e6a41c" />
    <path d="M0 5h32v21H0z" fill="#fbd76a" />
    <path d="M5 26V16l3-2h16l3 2v12h-6v-7H11v7H5z" fill="#3b8fd8" />
  </svg>
);

const ChromeIcon = () => (
  <svg className="h-[33px] w-[33px]" viewBox="0 0 32 32">
    <path d="M16 16L2.100 8A16 16 0 0 1 29.900 8z" fill="#e0443a" />
    <path d="M16 16L29.900 8A16 16 0 0 1 16 32z" fill="#fcc934" />
    <path d="M16 16L16 32A16 16 0 0 1 2.100 8z" fill="#2da44f" />
    <path d="M16 8.500H30A16 16 0 0 1 16 32l6.500-12z" fill="#fcc934" />
    <circle cx="16" cy="16" r="7.500" fill="#fff" />
    <circle cx="16" cy="16" r="6" fill="#4285f4" />
  </svg>
);

const WordIcon = () => (
  <span className="grid h-8 w-9 items-center">
    <svg className="col-start-1 row-start-1 h-8 w-9" viewBox="0 0 36 32">
      <path d="M9 0h27v8H9z" fill="#41a5ee" />
      <path d="M9 8h27v8H9z" fill="#2b7cd3" />
      <path d="M9 16h27v8H9z" fill="#185abd" />
      <path d="M9 24h27v8H9z" fill="#103f91" />
      <path d="M0 8h18v17H0z" fill="#1a52b5" />
    </svg>
    <b className="col-start-1 row-start-1 w-[18px] text-center text-[14px] leading-4 text-white">W</b>
  </span>
);

const WeChatIcon = () => (
  <span className="flex h-9 w-9 items-center justify-center bg-[#09ad1c]">
    <FaWeixin className="h-7 w-7 text-white" />
  </span>
);

const apps = [
  { name: "Edge", icon: <FaEdgeLegacy className="h-8 w-8 text-[#0078d7]" /> },
  { name: "文件资源管理器", icon: <ExplorerIcon /> },
  { name: "Chrome", icon: <ChromeIcon /> },
  { name: "ArcMap", icon: <ArcMapLogo className="h-9 w-9" />, active: true },
  { name: "微信", icon: <WeChatIcon /> },
  { name: "Word", icon: <WordIcon /> },
];

const Taskbar = () => (
  <div className="flex h-[60px] shrink-0 bg-[linear-gradient(90deg,#26343b_0,#28353b_14%,#403d3c_20%,#403d3b_27%,#27334a_33%,#26343b_40%,#26353c_60%,#2b2b2b_72%,#232c30_78%,#1e2b32_100%)] text-white">
    <button type="button" aria-label="开始" className="flex w-[72px] items-center justify-center">
      <svg className="h-6 w-6" viewBox="0 0 24 24" fill="#fff">
        <path d="M0 3.500L10 2v9.500H0zM11 1.800L24 0v11.500H11zM0 12.500h10V22L0 20.500zM11 12.500h13V24l-13-1.800z" />
      </svg>
    </button>
    <button type="button" aria-label="搜索" className="flex w-[72px] items-center justify-center">
      <svg className="h-6 w-6" viewBox="0 0 24 24" fill="none" stroke="#fff" strokeWidth="1.500">
        <circle cx="15.500" cy="8.500" r="7.800" />
        <path d="M10 14L0 24" />
      </svg>
    </button>
    <button type="button" aria-label="Cortana" className="flex w-[72px] items-center justify-center">
      <i className="h-[23px] w-[23px] rounded-full border-[3px] border-white" />
    </button>
    <button type="button" aria-label="任务视图" className="flex w-[72px] items-center justify-center">
      <svg className="h-6 w-6" viewBox="0 0 24 24" fill="none" stroke="#fff" strokeWidth="1.500">
        <path d="M1 0v4h14V0M1 8h14v8H1zM1 24v-4h14v4M22 0v6M22 11v13M20.500 8h3" />
      </svg>
    </button>
    <div className="ml-[160px] flex">
      {apps.map(({ name, icon, active }) => (
        <button
          key={name}
          type="button"
          aria-label={name}
          className={`flex w-[75px] flex-col items-center ${active ? "bg-[#505b62]" : ""}`}
        >
          <span className="flex flex-1 items-center">{icon}</span>
          <i className={`h-[3px] bg-[#76b9ed] ${active ? "w-full" : "w-[61px]"}`} />
        </button>
      ))}
    </div>
    <div className="ml-auto flex items-center">
      <svg className="h-[10px] w-[18px]" viewBox="0 0 18 10" fill="none">
        <path d="M0 9.500l9-9 9 9" stroke="#fff" strokeWidth="1.500" />
      </svg>
      <svg className="ml-[14px] h-4 w-6" viewBox="0 0 24 16" fill="none">
        <path d="M1 0v3M5 0v3M0 3h6v3L4 8v6h3" stroke="#fff" strokeWidth="1.500" />
        <rect x="9" y="5" width="12" height="8" fill="#fff" />
        <path d="M7 3h16v12H7zM24 7v4" stroke="#fff" />
      </svg>
      <svg className="ml-[13px] h-6 w-[22px]" viewBox="0 0 22 24" fill="none">
        <circle cx="9" cy="12" r="8" stroke="#f5b02c" strokeWidth="2.500" />
        <path d="M5 11l4 5L18 2" stroke="#fff" strokeWidth="2" />
        <circle cx="15" cy="17" r="7" fill="#d8262c" />
        <path d="M12 16h6v5h-6z" fill="#fff" />
        <path d="M13 16v-3h4v3" stroke="#fff" strokeWidth="1.500" />
      </svg>
      <span className="ml-3 text-[23px] leading-6">中</span>
      <span className="ml-5 bg-white text-[22px] leading-[22px] font-medium text-black">拼</span>
      <time className="ml-[24px] w-[100px] text-center text-[18px] leading-7">
        16:48
        <br />
        2020/6/13
      </time>
      <span className="ml-[24px] grid h-[46px] w-[38px]">
        <svg className="col-start-1 row-start-1 mt-[10px] h-6 w-6" viewBox="0 0 24 24">
          <path d="M3 0h21v20h-6l-5 4v-4H3z" fill="#fff" />
          <path d="M7 6h13M7 10h13M7 14h9" stroke="#26343b" strokeWidth="1.600" />
          <path d="M.5 3v17" stroke="#fff" />
        </svg>
        <span className="col-start-1 row-start-1 mr-[2px] mb-1 h-5 w-5 self-end justify-self-end rounded-[3px] border border-[#8f93a8] bg-[#232a45] text-center text-[13px] leading-[18px]">
          3
        </span>
      </span>
      <svg className="ml-[24px] h-6 w-6" viewBox="0 0 24 24" fill="none">
        <path d="M.8.8h22.400v17H16l-4 4.500-4-4.500H.8z" stroke="#fff" strokeWidth="1.500" />
      </svg>
      <i className="mr-[6px] ml-[30px] h-[60px] w-px bg-[#6f777c]" />
    </div>
  </div>
);

const App = () => {
  return (
    <div className="relative flex h-screen w-full flex-col overflow-hidden bg-gradient-to-r from-[#f0f0f0] to-[#fbfbfb] font-['Open_Sans','Noto_Sans_CJK_SC',sans-serif] text-[#111]">
      <TitleBar />
      <MenuBar />
      <Toolbars />
      <div className="flex min-h-0 flex-1">
        <TableOfContents />
        <MapView />
        <CatalogTab />
      </div>
      <StatusBar />
      <Taskbar />

      <ContextMenu />
      <Tooltip />
      <SpeedWidget />
      <p className="absolute right-[10px] bottom-[7px] font-['Liberation_Sans',sans-serif] text-[16px] leading-6 text-white/60">
        https://blog.csdn.net/weixin_45126863
      </p>
    </div>
  );
};

export default App;
